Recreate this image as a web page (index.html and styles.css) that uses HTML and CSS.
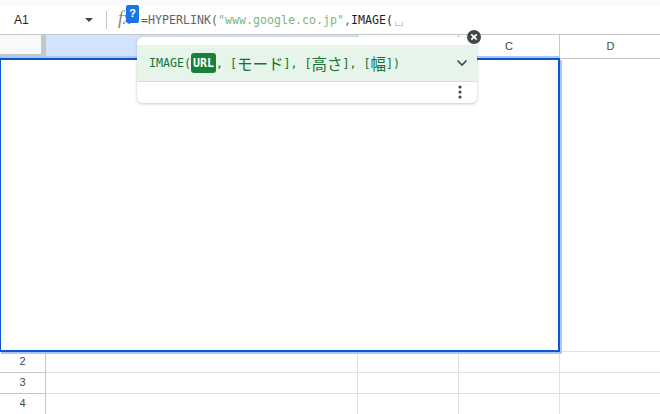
FILE: index.html
```html
<!DOCTYPE html>
<html lang="ja">
<head>
    <meta charset="UTF-8">
    <title>Sheets</title>
    <link rel="stylesheet" href="styles.css">
</head>
<body>
<div class="top-strip"></div>
<div class="formula-bar">
    <div class="name-box">
        <span class="cell-name">A1</span>
        <span class="name-arrow"></span>
    </div>
    <div class="bar-divider"></div>
    <div class="fx">fx</div>
    <div class="help-badge">?</div>
    <div class="formula-text">=HYPERLINK(<span class="str">"www.google.co.jp"</span>,<span class="dark">IMAGE(</span><span class="space-mark"></span></div>
</div>

<div class="sheet">
    <div class="row head-row">
        <div class="row-head corner"></div>
        <div class="col col-a selected"></div>
        <div class="col col-b"></div>
        <div class="col col-c">C</div>
        <div class="col col-d">D</div>
    </div>
    <div class="row tall-row">
        <div class="row-head"></div>
        <div class="cell col-a"></div>
        <div class="cell col-b"></div>
        <div class="cell col-c"></div>
        <div class="cell col-d"></div>
    </div>
    <div class="row">
        <div class="row-head">2</div>
        <div class="cell col-a"></div>
        <div class="cell col-b"></div>
        <div class="cell col-c"></div>
        <div class="cell col-d"></div>
    </div>
    <div class="row">
        <div class="row-head">3</div>
        <div class="cell col-a"></div>
        <div class="cell col-b"></div>
        <div class="cell col-c"></div>
        <div class="cell col-d"></div>
    </div>
    <div class="row">
        <div class="row-head">4</div>
        <div class="cell col-a"></div>
        <div class="cell col-b"></div>
        <div class="cell col-c"></div>
        <div class="cell col-d"></div>
    </div>
    <div class="cell-editor"></div>
</div>

<div class="hint">
    <div class="hint-main">
        <div class="hint-sig">IMAGE(<span class="hint-arg">URL</span>, [<span class="cjk">モード</span>], [<span class="cjk">高さ</span>], [<span class="cjk">幅</span>])</div>
        <svg class="hint-chevron" width="12" height="8" viewBox="0 0 12 8"><path d="M1.5 1.5L6 6l4.5-4.5" fill="none" stroke="#444746" stroke-width="1.6"/></svg>
    </div>
    <div class="hint-foot">
        <svg width="4" height="14" viewBox="0 0 4 14"><circle cx="2" cy="2" r="1.6" fill="#444746"/><circle cx="2" cy="7" r="1.6" fill="#444746"/><circle cx="2" cy="12" r="1.6" fill="#444746"/></svg>
    </div>
</div>
<svg class="hint-close" width="14" height="14" viewBox="0 0 14 14"><circle cx="7" cy="7" r="7" fill="#444746"/><path d="M4.3 4.3l5.4 5.4M9.7 4.3l-5.4 5.4" stroke="#fff" stroke-width="1.8"/></svg>
</body>
</html>
```

FILE: styles.css
```css
html, body {
    margin: 0;
    padding: 0;
    height: 414px;
    overflow: hidden;
    background-color: #fff;
    font-family: "Liberation Sans", Arial, sans-serif;
}
.top-strip {
    height: 6px;
    background-color: #f9fbfd;
}
.formula-bar {
    position: relative;
    display: flex;
    align-items: center;
    height: 28px;
    border-bottom: 1px solid #c4c7c5;
    background-color: #fff;
}
.name-box {
    display: flex;
    align-items: center;
    justify-content: space-between;
    width: 79px;
    padding: 0 13px 0 14px;
    font-size: 12px;
    color: #1f1f1f;
}
.name-arrow {
    width: 0;
    height: 0;
    border-left: 4px solid transparent;
    border-right: 4px solid transparent;
    border-top: 4px solid #444746;
}
.bar-divider {
    width: 1px;
    height: 18px;
    background-color: #c7c7c7;
}
.fx {
    width: 23px;
    margin: -3px 0 0 11px;
    font-family: "Liberation Serif", serif;
    font-style: italic;
    font-size: 18px;
    color: #80868b;
}
.help-badge {
    position: absolute;
    left: 126px;
    top: -1px;
    width: 13px;
    height: 18px;
    line-height: 17px;
    border-radius: 2px;
    background-color: #1a73e8;
    color: #fff;
    font-size: 11px;
    font-weight: bold;
    text-align: center;
}
.formula-text {
    display: flex;
    align-items: center;
    font-family: "DejaVu Sans Mono", "Liberation Mono", monospace;
    font-size: 11.63px;
    color: #5f6368;
    white-space: pre;
}
.str {
    color: #7cb77f;
}
.dark {
    color: #1f1f1f;
}
.space-mark {
    width: 6px;
    height: 3px;
    margin: 7px 0 0 2px;
    border: 1px solid #c4c7c5;
    border-top: none;
}
.sheet {
    position: relative;
}
.row {
    display: flex;
    height: 21px;
    box-sizing: border-box;
    border-bottom: 1px solid #e1e1e1;
}
.head-row {
    height: 24px;
    border-bottom: 1px solid #c4c7c5;
}
.tall-row {
    height: 293px;
}
.row-head {
    flex: none;
    width: 45px;
    border-right: 1px solid #c4c7c5;
    margin-bottom: -1px;
    border-bottom: 1px solid #c4c7c5;
    font-size: 11px;
    line-height: 19px;
    text-align: center;
    color: #444746;
}
.corner {
    background-color: #f8f9fa;
    border-right: 5px solid #c4c7c5;
    border-bottom: 2px solid #c4c7c5;
    box-sizing: border-box;
    width: 46px;
    height: 21px;
}
.col, .cell {
    flex: none;
    box-sizing: border-box;
    border-right: 1px solid #e1e1e1;
}
.col {
    border-right-color: #c4c7c5;
    font-size: 11px;
    line-height: 23px;
    text-align: center;
    color: #444746;
}
.col-a {
    width: 312px;
}
.col-b, .col-c, .col-d {
    width: 101px;
}
.col-d {
    border-right: none;
}
.selected {
    background-color: #d3e3fd;
}
.cell-editor {
    position: absolute;
    left: -1px;
    top: 23px;
    width: 557px;
    height: 290px;
    border: 2px solid #0b57d0;
    background-color: #fff;
    box-shadow: 2px 2px 0 0 #a8c7fa, 0 -2px 0 0 #a8c7fa;
}
.hint {
    position: absolute;
    left: 137px;
    top: 37px;
    width: 340px;
    height: 66px;
    background-color: #fff;
    border-radius: 6px;
    box-shadow: 0 1px 3px rgba(60, 64, 67, 0.3);
    overflow: hidden;
}
.hint-main {
    display: flex;
    align-items: center;
    justify-content: space-between;
    height: 36px;
    margin-top: 8px;
    padding: 0 9px 0 12px;
    background-color: #e6f4ea;
    border-bottom: 1px solid #dadce0;
}
.hint-sig {
    display: flex;
    align-items: center;
    font-family: "DejaVu Sans Mono", "Liberation Mono", monospace;
    font-size: 11.63px;
    color: #137333;
    white-space: pre;
}
.hint-arg {
    height: 20px;
    padding: 0 2px;
    line-height: 20px;
    border-radius: 3px;
    background-color: #188038;
    color: #fff;
    font-weight: bold;
}
.cjk {
    font-family: "Noto Sans CJK JP", sans-serif;
    font-size: 15.5px;
    line-height: 20px;
}
.hint-foot {
    display: flex;
    justify-content: flex-end;
    padding: 3px 15px 0 0;
}
.hint-close {
    position: absolute;
    left: 467px;
    top: 30px;
}
```
